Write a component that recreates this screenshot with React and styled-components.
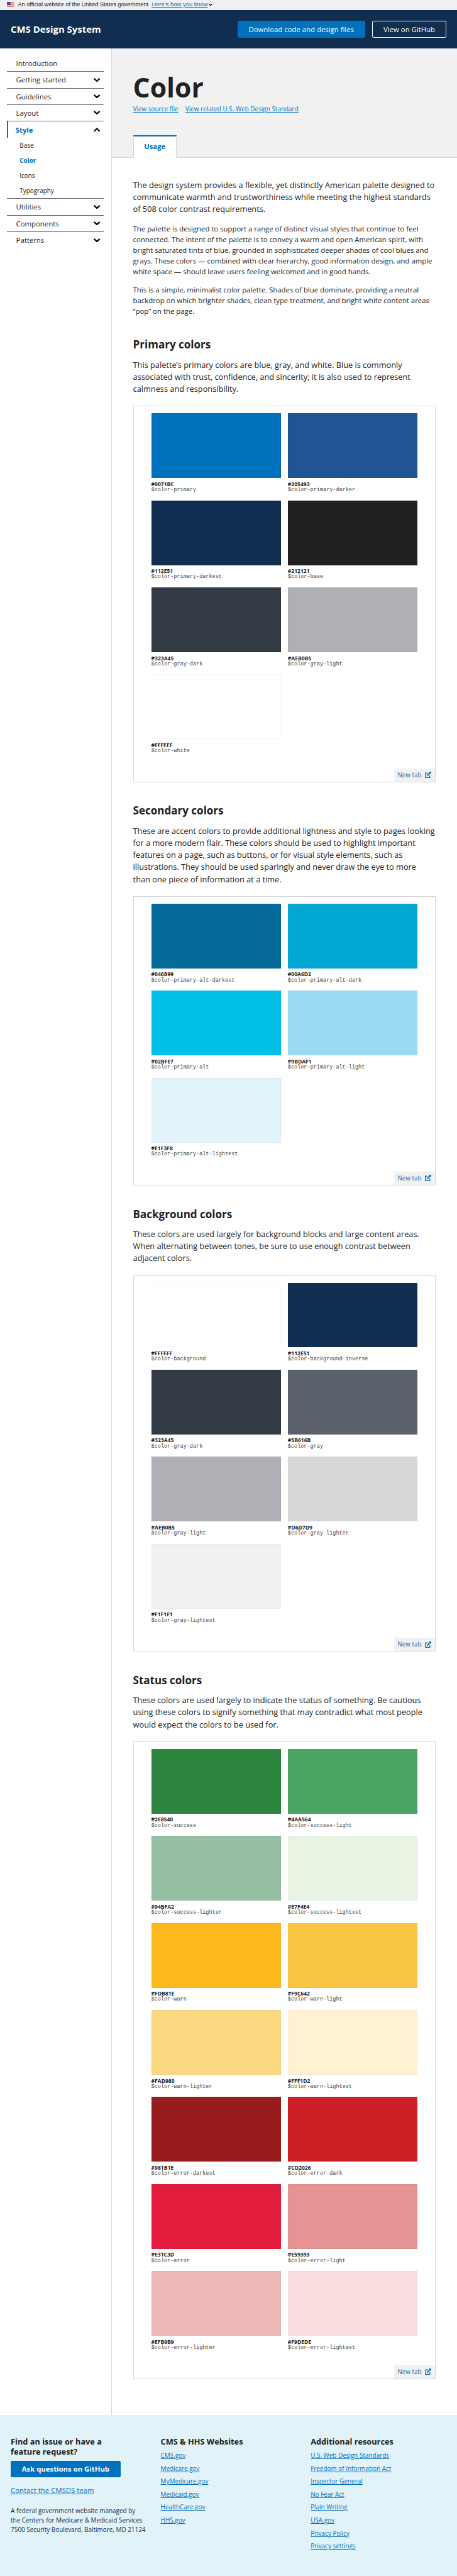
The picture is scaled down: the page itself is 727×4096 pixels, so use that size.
import React from "react";
import styled, { createGlobalStyle, css } from "styled-components";

/* 1rem is ten design pixels. */
const GlobalStyle = createGlobalStyle`
  *, *::before, *::after { box-sizing: border-box; }
  html { font-size: 7.1px; }
  body {
    margin: 0;
    background: #fff;
    color: #212121;
    font-family: "Open Sans", "Noto Sans", sans-serif;
    font-size: 1.6rem;
    line-height: 1.5;
  }
  h1, h2, h3, p, ul { margin: 0; padding: 0; }
  ul { list-style: none; }
`;

const Page = styled.div`
  display: flex;
  flex-direction: column;
  width: 100%;
  height: 4096px;
  overflow: hidden;
`;

const Link = styled.a`
  color: #0071bc;
  text-decoration: underline;
`;

/* Government banner */
const Banner = styled.div`
  display: flex;
  align-items: center;
  flex: none;
  height: 2.2rem;
  padding: 0 1.6rem 0.1rem;
  background: #f0f0f0;
  font-family: "Liberation Sans", Arial, sans-serif;
  font-size: 1.3rem;
  line-height: 1;
  white-space: nowrap;
`;
const FlagIcon = styled.svg`
  width: 1.6rem;
  height: 1.1rem;
  margin: 0 0.8rem 0.2rem 0;
`;
const BannerText = styled.span`
  letter-spacing: -0.002rem;
`;
const BannerLink = styled(Link)`
  margin: 0 0.2rem 0 0.75rem;
  letter-spacing: 0.014rem;
`;
const Chevron = styled.svg`
  flex: none;
  width: ${(p) => p.$size || "1.45rem"};
  height: auto;
  transform: ${(p) => (p.$up ? "rotate(180deg)" : "none")};
`;

/* Site header */
const Header = styled.header`
  display: flex;
  align-items: center;
  flex: none;
  gap: 1.6rem;
  height: 8.6rem;
  padding: 0 2.4rem;
  background: #112e51;
  color: #fff;
`;
const SiteTitle = styled.div`
  flex: 1;
  font-size: 2.1rem;
  font-weight: 700;
  white-space: nowrap;
`;
const Button = styled.a`
  display: inline-flex;
  align-items: center;
  justify-content: center;
  width: ${(p) => p.$width};
  height: 3.8rem;
  border: 1px solid ${(p) => (p.$outline ? "#fff" : "#0071bc")};
  border-radius: 0.3rem;
  background: ${(p) => (p.$outline ? "transparent" : "#0071bc")};
  color: #fff;
  font-weight: ${(p) => (p.$bold ? 700 : 400)};
  white-space: nowrap;
`;

/* Body */
const Body = styled.div`
  display: flex;
  flex: none;
  height: 530rem;
`;
const Sidebar = styled.nav`
  flex: none;
  width: 25rem;
  padding: 1.6rem 1.6rem 0;
  border-right: 1px solid #d6d7d9;
`;
const NavRow = styled.li`
  display: flex;
  align-items: center;
  justify-content: space-between;
  height: 3.7rem;
  padding: 0 0.8rem 0 2rem;
  border-bottom: ${(p) => (p.$line ? "1px solid #5b616b" : "none")};
  ${(p) =>
    p.$active &&
    css`
      padding-left: 1.6rem;
      border-left: 0.4rem solid #0071bc;
      color: #0071bc;
      font-weight: 700;
    `}
`;
const SubNav = styled.ul`
  height: 13.65rem;
  border-bottom: 1px solid #5b616b;
`;
const SubNavRow = styled.li`
  display: flex;
  align-items: center;
  height: 3.4rem;
  padding-left: 2.8rem;
  font-size: 1.4rem;
  color: ${(p) => (p.$active ? "#0071bc" : "inherit")};
  font-weight: ${(p) => (p.$active ? 700 : 400)};
`;

const Main = styled.main`
  flex: 1;
  min-width: 0;
`;
const Hero = styled.div`
  display: flex;
  flex-direction: column;
  height: 24.5rem;
  padding: 4.8rem 4.8rem 0;
  border-bottom: 1px solid #d6d7d9;
  background: #f1f1f1;
`;
const Title = styled.h1`
  font-size: 6rem;
  font-weight: 700;
  line-height: 1.3;
`;
const HeroLinks = styled.div`
  display: flex;
  gap: 1.6rem;
  font-size: 1.4rem;
  line-height: 2.1rem;
`;
const Tab = styled.div`
  display: flex;
  align-items: center;
  justify-content: center;
  width: 9.8rem;
  height: 5rem;
  margin: auto 0 -1px;
  padding-bottom: 0.3rem;
  border: 1px solid #d6d7d9;
  border-top: 0.4rem solid #0071bc;
  border-bottom: 0;
  background: #fff;
  color: #0071bc;
  font-weight: 700;
`;
const Content = styled.div`
  padding: 4.8rem 4.8rem 0;
  white-space: nowrap;
`;
const Lead = styled.p`
  font-size: 1.8rem;
  line-height: 2.7rem;
`;
const Paragraph = styled.p`
  margin-top: ${(p) => (p.$first ? "1.8rem" : "1.6rem")};
  line-height: 2.4rem;
`;
const Section = styled.section`
  padding-top: 4.87rem;
`;
const SectionTitle = styled.h2`
  margin-bottom: 1.6rem;
  font-size: 2.4rem;
  font-weight: 700;
  line-height: 3.1rem;
`;
const Example = styled.div`
  display: flex;
  flex-direction: column;
  justify-content: space-between;
  height: ${(p) => p.$rows * 19.5 + 6.33}rem;
  margin-top: 2.4rem;
  border: 1px solid #d6d7d9;
`;
const Swatches = styled.div`
  display: grid;
  grid-template-columns: 29rem 29rem;
  grid-auto-rows: 19.5rem;
  column-gap: 1.6rem;
  padding: 1.55rem 0 0 3.95rem;
`;
const Color = styled.div`
  height: 14.5rem;
  margin-bottom: 0.5rem;
  border: 1px solid rgba(0, 0, 0, 0.03);
  background: ${(p) => p.$value};
`;
const Hex = styled.div`
  font-size: 1.2rem;
  font-weight: 700;
  line-height: 1.6rem;
`;
const Variable = styled.code`
  display: block;
  color: #444;
  font-family: "Liberation Mono", "Courier New", monospace;
  font-size: 1.2rem;
  line-height: 1.4rem;
`;
const NewTab = styled.a`
  display: flex;
  align-items: center;
  align-self: flex-end;
  gap: 0.8rem;
  height: 3rem;
  padding: 0 0.8rem;
  background: #f1f1f1;
  color: #0071bc;
  font-size: 1.4rem;
`;
const NewTabIcon = styled.svg`
  width: 1.4rem;
  height: 1.4rem;
`;

/* Footer */
const Footer = styled.footer`
  display: grid;
  grid-template-columns: repeat(3, 33.6rem);
  flex: 1;
  padding: 4.8rem 2.4rem 0;
  background: #e1f3f8;
  white-space: nowrap;
`;
const FooterTitle = styled.h3`
  font-size: 1.8rem;
  font-weight: 700;
  line-height: 2.33rem;
`;
const FooterLinks = styled.ul`
  padding-top: 0.55rem;
  font-size: 1.4rem;
`;
const FooterItem = styled.li`
  height: 2.9rem;
  line-height: 2.9rem;
`;
const AskRow = styled.div`
  display: flex;
  margin: 0.8rem 0 1.6rem;
`;
const Address = styled.p`
  margin-top: 2.4rem;
  color: #112e51;
  font-size: 1.4rem;
  line-height: 2.1rem;
`;

function ChevronIcon({ size, up }) {
  return (
    <Chevron $size={size} $up={up} viewBox="0 0 14 9">
      <path d="M1.7 1.9 7 6.9l5.3-5" fill="none" stroke="#000" strokeWidth="2.9" strokeLinecap="round" />
    </Chevron>
  );
}

function Flag() {
  return (
    <FlagIcon viewBox="0 0 16 11">
      <rect width="16" height="11" fill="#fff" />
      {[0, 2, 4, 6, 8, 10].map((y) => (
        <rect key={y} y={y} width="16" height="1" fill="#db3e1f" />
      ))}
      <rect width="8" height="7" fill="#1e33b1" />
      {[1, 3, 5].map((y) =>
        [1, 3, 5, 7].map((x) => (
          <rect key={`${x}-${y}`} x={x - (y === 3 ? 0.9 : 0.3)} y={y} width="0.7" height="0.7" fill="#fff" />
        ))
      )}
    </FlagIcon>
  );
}

function Palette({ title, lead, colors }) {
  return (
    <Section>
      <SectionTitle>{title}</SectionTitle>
      <Lead>
        {lead.map((line) => (
          <React.Fragment key={line}>
            {line}
            <br />
          </React.Fragment>
        ))}
      </Lead>
      <Example $rows={Math.ceil(colors.length / 2)}>
        <Swatches>
          {colors.map(([hex, name]) => (
            <div key={name}>
              <Color $value={hex} />
              <Hex>{hex}</Hex>
              <Variable>$color-{name}</Variable>
            </div>
          ))}
        </Swatches>
        <NewTab>
          New tab
          <NewTabIcon viewBox="0 0 14 14">
            <path d="M6.5 3.1H.9v10h10V8.6" fill="none" stroke="currentColor" strokeWidth="1.8" />
            <path d="M8.2 0H14v5.8l-1.9-1.9-6.3 6.2-1.9-1.9 6.3-6.3z" fill="currentColor" />
          </NewTabIcon>
        </NewTab>
      </Example>
    </Section>
  );
}

const primary = [
  ["#0071BC", "primary"],
  ["#205493", "primary-darker"],
  ["#112E51", "primary-darkest"],
  ["#212121", "base"],
  ["#323A45", "gray-dark"],
  ["#AEB0B5", "gray-light"],
  ["#FFFFFF", "white"],
];
const secondary = [
  ["#046B99", "primary-alt-darkest"],
  ["#00A6D2", "primary-alt-dark"],
  ["#02BFE7", "primary-alt"],
  ["#9BDAF1", "primary-alt-light"],
  ["#E1F3F8", "primary-alt-lightest"],
];
const background = [
  ["#FFFFFF", "background"],
  ["#112E51", "background-inverse"],
  ["#323A45", "gray-dark"],
  ["#5B616B", "gray"],
  ["#AEB0B5", "gray-light"],
  ["#D6D7D9", "gray-lighter"],
  ["#F1F1F1", "gray-lightest"],
];
const status = [
  ["#2E8540", "success"],
  ["#4AA564", "success-light"],
  ["#94BFA2", "success-lighter"],
  ["#E7F4E4", "success-lightest"],
  ["#FDB81E", "warn"],
  ["#F9C642", "warn-light"],
  ["#FAD980", "warn-lighter"],
  ["#FFF1D2", "warn-lightest"],
  ["#981B1E", "error-darkest"],
  ["#CD2026", "error-dark"],
  ["#E31C3D", "error"],
  ["#E59393", "error-light"],
  ["#EFB9B9", "error-lighter"],
  ["#F9DEDE", "error-lightest"],
];
const cmsSites = ["CMS.gov", "Medicare.gov", "MyMedicare.gov", "Medicaid.gov", "HealthCare.gov", "HHS.gov"];
const resources = [
  "U.S. Web Design Standards",
  "Freedom of Information Act",
  "Inspector General",
  "No Fear Act",
  "Plain Writing",
  "USA.gov",
  "Privacy Policy",
  "Privacy settings",
];

function LinkColumn({ title, links }) {
  return (
    <div>
      <FooterTitle>{title}</FooterTitle>
      <FooterLinks>
        {links.map((l) => (
          <FooterItem key={l}>
            <Link>{l}</Link>
          </FooterItem>
        ))}
      </FooterLinks>
    </div>
  );
}

export default function App() {
  return (
    <Page>
      <GlobalStyle />
      <Banner>
        <Flag />
        <BannerText>An official website of the United States government</BannerText>
        <BannerLink>Here’s how you know</BannerLink>
        <ChevronIcon size="0.8rem" />
      </Banner>
      <Header>
        <SiteTitle>CMS Design System</SiteTitle>
        <Button $width="28.6rem">Download code and design files</Button>
        <Button $width="16.6rem" $outline>View on GitHub</Button>
      </Header>
      <Body>
        <Sidebar>
          <ul>
            <NavRow $line>Introduction</NavRow>
            {["Getting started", "Guidelines", "Layout"].map((item) => (
              <NavRow key={item} $line>
                {item}
                <ChevronIcon />
              </NavRow>
            ))}
            <NavRow $active>
              Style
              <ChevronIcon up />
            </NavRow>
          </ul>
          <SubNav>
            {["Base", "Color", "Icons", "Typography"].map((item) => (
              <SubNavRow key={item} $active={item === "Color"}>{item}</SubNavRow>
            ))}
          </SubNav>
          <ul>
            {["Utilities", "Components", "Patterns"].map((item) => (
              <NavRow key={item} $line={item !== "Patterns"}>
                {item}
                <ChevronIcon />
              </NavRow>
            ))}
          </ul>
        </Sidebar>
        <Main>
          <Hero>
            <Title>Color</Title>
            <HeroLinks>
              <Link>View source file</Link>
              <Link>View related U.S. Web Design Standard</Link>
            </HeroLinks>
            <Tab>Usage</Tab>
          </Hero>
          <Content>
            <Lead>
              The design system provides a flexible, yet distinctly American palette designed to<br />
              communicate warmth and trustworthiness while meeting the highest standards<br />
              of 508 color contrast requirements.
            </Lead>
            <Paragraph $first>
              The palette is designed to support a range of distinct visual styles that continue to feel<br />
              connected. The intent of the palette is to convey a warm and open American spirit, with<br />
              bright saturated tints of blue, grounded in sophisticated deeper shades of cool blues and<br />
              grays. These colors — combined with clear hierarchy, good information design, and ample<br />
              white space — should leave users feeling welcomed and in good hands.
            </Paragraph>
            <Paragraph>
              This is a simple, minimalist color palette. Shades of blue dominate, providing a neutral<br />
              backdrop on which brighter shades, clean type treatment, and bright white content areas<br />
              “pop” on the page.
            </Paragraph>
            <Palette
              title="Primary colors"
              lead={[
                "This palette’s primary colors are blue, gray, and white. Blue is commonly",
                "associated with trust, confidence, and sincerity; it is also used to represent",
                "calmness and responsibility.",
              ]}
              colors={primary}
            />
            <Palette
              title="Secondary colors"
              lead={[
                "These are accent colors to provide additional lightness and style to pages looking",
                "for a more modern flair. These colors should be used to highlight important",
                "features on a page, such as buttons, or for visual style elements, such as",
                "illustrations. They should be used sparingly and never draw the eye to more",
                "than one piece of information at a time.",
              ]}
              colors={secondary}
            />
            <Palette
              title="Background colors"
              lead={[
                "These colors are used largely for background blocks and large content areas.",
                "When alternating between tones, be sure to use enough contrast between",
                "adjacent colors.",
              ]}
              colors={background}
            />
            <Palette
              title="Status colors"
              lead={[
                "These colors are used largely to indicate the status of something. Be cautious",
                "using these colors to signify something that may contradict what most people",
                "would expect the colors to be used for.",
              ]}
              colors={status}
            />
          </Content>
        </Main>
      </Body>
      <Footer>
        <div>
          <FooterTitle>
            Find an issue or have a<br />
            feature request?
          </FooterTitle>
          <AskRow>
            <Button $width="24.6rem" $bold>Ask questions on GitHub</Button>
          </AskRow>
          <Link>Contact the CMSDS team</Link>
          <Address>
            A federal government website managed by<br />
            the Centers for Medicare &amp; Medicaid Services<br />
            7500 Security Boulevard, Baltimore, MD 21124
          </Address>
        </div>
        <LinkColumn title="CMS & HHS Websites" links={cmsSites} />
        <LinkColumn title="Additional resources" links={resources} />
      </Footer>
    </Page>
  );
}
